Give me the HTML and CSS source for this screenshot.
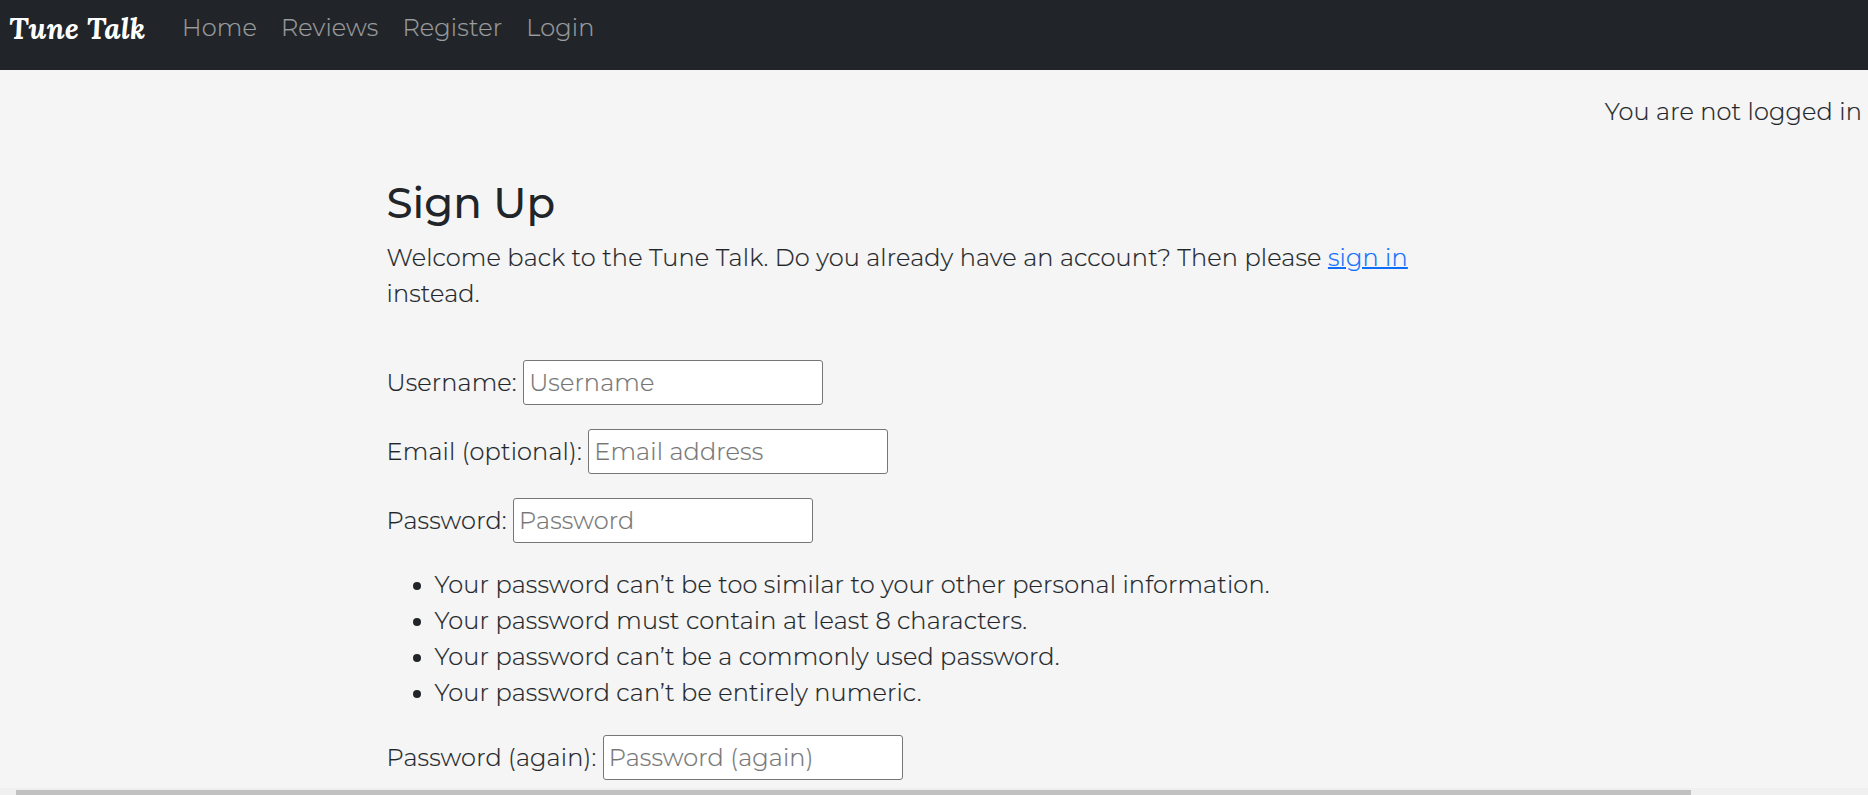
FILE: index.html
```html
<!DOCTYPE html>
<html lang="en">
<head>
<meta charset="utf-8">
<title>Tune Talk - Sign Up</title>
<link rel="stylesheet" href="styles.css">
</head>
<body>
<div class="page">
  <nav class="navbar">
    <a class="brand">Tune Talk</a>
    <ul class="nav-links">
      <li class="nav-link">Home</li>
      <li class="nav-link">Reviews</li>
      <li class="nav-link">Register</li>
      <li class="nav-link">Login</li>
    </ul>
  </nav>
  <p class="status">You are not logged in</p>
  <main class="content">
    <h1 class="title">Sign Up</h1>
    <p class="intro">Welcome back to the Tune Talk. Do you already have an account? Then please <a class="link" href="#">sign in</a> instead.</p>
    <form class="form">
      <p class="field"><label for="username">Username:</label> <input class="input" id="username" type="text" placeholder="Username"></p>
      <p class="field"><label for="email">Email (optional):</label> <input class="input" id="email" type="email" placeholder="Email address"></p>
      <p class="field"><label for="password1">Password:</label> <input class="input" id="password1" type="password" placeholder="Password"></p>
      <ul class="hints">
        <li>Your password can’t be too similar to your other personal information.</li>
        <li>Your password must contain at least 8 characters.</li>
        <li>Your password can’t be a commonly used password.</li>
        <li>Your password can’t be entirely numeric.</li>
      </ul>
      <p class="field"><label for="password2">Password (again):</label> <input class="input" id="password2" type="password" placeholder="Password (again)"></p>
    </form>
  </main>
  <div class="scrollbar"><div class="thumb"></div></div>
</div>
</body>
</html>
```
FILE: styles.css
```css
* { box-sizing: border-box; }
body {
  margin: 0;
  background: #f5f5f5;
  color: #212529;
  font: 300 24px/36px Montserrat, Inter, sans-serif;
  letter-spacing: 0.155px;
  -webkit-text-stroke: 0.2px;
}
.page {
  display: flex;
  flex-direction: column;
  height: 795px;
  overflow: hidden;
}
.navbar {
  display: flex;
  flex: none;
  align-items: flex-start;
  height: 70px;
  padding-left: 9px;
  background: #212529;
}
.brand {
  width: 161px;
  padding-top: 6px;
  color: #fff;
  font: italic 700 30px/45px Lora, "Liberation Serif", serif;
  letter-spacing: 0;
  -webkit-text-stroke: 0;
}
.nav-links {
  display: flex;
  margin: 0;
  padding: 0;
  list-style: none;
}
.nav-link {
  padding: 10px 12px;
  color: #9b9d9f;
}
.status {
  flex: none;
  margin: 0;
  padding: 24px 6px 0 0;
  text-align: right;
}
.content {
  flex: 1;
  min-height: 0;
  width: 1095px;
  margin: 0 auto;
  padding-top: 48px;
}
.title {
  margin: 0 0 12px;
  font-size: 42px;
  font-weight: 500;
  line-height: 50px;
  letter-spacing: 0;
  -webkit-text-stroke: 0;
}
.intro {
  width: 1040px;
  margin: 0 0 48px;
}
.link {
  color: #0d6efd;
  text-decoration: underline;
  text-decoration-thickness: 2px;
}
.field {
  margin: 0 0 24px;
}
.input {
  width: 300px;
  height: 45px;
  margin: 0;
  padding: 1px 5px;
  border: 1px solid #767676;
  border-radius: 3px;
  background: #fff;
  font: inherit;
  letter-spacing: inherit;
  vertical-align: baseline;
}
.input::placeholder { color: #757575; opacity: 1; }
.hints {
  margin: 0 0 24px;
  padding-left: 48px;
}
.scrollbar {
  flex: none;
  height: 7px;
  padding: 2px 177px 0 16px;
  background: #f0f0f0;
}
.thumb {
  height: 5px;
  background: #c1c1c1;
}
```
